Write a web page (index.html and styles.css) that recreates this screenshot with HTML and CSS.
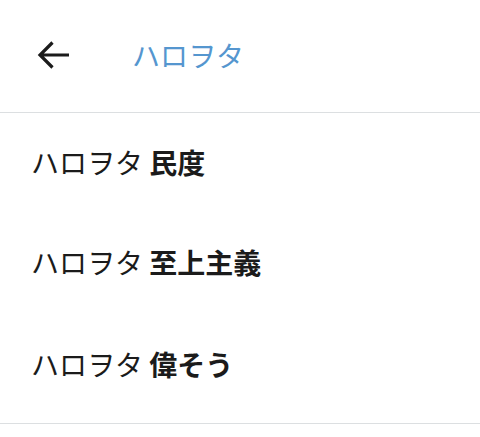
FILE: index.html
```html
<!DOCTYPE html>
<html lang="ja">
<head>
<meta charset="utf-8">
<link rel="stylesheet" href="styles.css">
</head>
<body>
<header class="bar">
  <span class="back">
    <svg width="34" height="32" viewBox="0 0 34 32" aria-hidden="true">
      <path d="M32 16H3.5M15.5 3.5L3 16l12.5 12.5" fill="none" stroke="#1b1b1b" stroke-width="3.2" stroke-linecap="butt" stroke-linejoin="miter"/>
    </svg>
  </span>
  <h1 class="title">ハロヲタ</h1>
</header>
<ul class="list">
  <li class="item">ハロヲタ <b>民度</b></li>
  <li class="item">ハロヲタ <b>至上主義</b></li>
  <li class="item">ハロヲタ <b>偉そう</b></li>
</ul>
</body>
</html>
```
FILE: styles.css
```css
html, body {
  margin: 0;
  padding: 0;
  background: #fff;
}
body {
  font-family: "Noto Sans CJK JP", "Noto Sans", sans-serif;
  color: #1b1b1b;
}
.bar {
  height: 112px;
  display: flex;
  align-items: center;
  border-bottom: 1px solid #dcdfe1;
  padding-left: 37px;
}
.back {
  display: flex;
  width: 34px;
  height: 32px;
  margin-top: -2px;
}
.title {
  margin: -2px 0 0 61px;
  font-size: 28px;
  font-weight: 400;
  color: #5596cf;
}
.list {
  list-style: none;
  margin: 0;
  padding: 0 0 8px;
  border-bottom: 1px solid #dcdfe1;
}
.item {
  height: 102px;
  display: flex;
  align-items: center;
  padding-left: 31px;
  font-size: 28px;
  white-space: pre;
}
.item:first-child {
  height: 98px;
}
.item b {
  font-weight: 700;
}
```
